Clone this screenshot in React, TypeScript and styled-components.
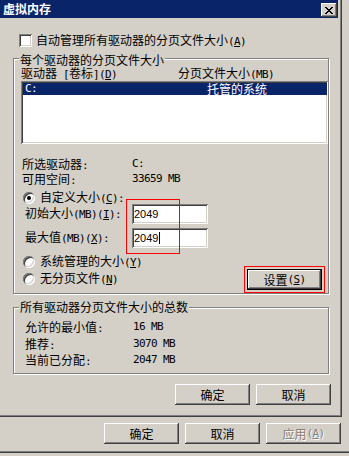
import * as React from 'react';
import styled, { createGlobalStyle, css } from 'styled-components';

const GlobalStyle = createGlobalStyle`
  html, body {
    margin: 0;
    padding: 0;
    background: #d4d0c8;
  }
  body {
    font-family: "Noto Sans CJK SC", "Noto Sans", sans-serif;
    font-size: 12px;
    line-height: 12px;
    color: #000;
  }
`;

const sunken = css`
  background: #fff;
  box-shadow: inset 1px 1px #808080, inset -1px -1px #fff, inset 2px 2px #404040,
    inset -2px -2px #d4d0c8;
`;

const raised = css`
  background: #d4d0c8;
  box-shadow: inset -1px -1px #404040, inset 1px 1px #fff, inset -2px -2px #808080,
    inset 2px 2px #d4d0c8;
`;

const Screen = styled.div`
  width: 349px;
  height: 456px;
  overflow: hidden;
  display: flex;
  flex-direction: column;
  background: #d4d0c8;
`;

const Window = styled.div`
  flex: none;
  width: 342px;
  height: 417px;
  box-sizing: border-box;
  border-right: 1px solid #404040;
  border-bottom: 1px solid #404040;
`;

const Frame = styled.div`
  height: 100%;
  box-sizing: border-box;
  border-right: 1px solid #808080;
  border-bottom: 1px solid #808080;
  padding-right: 2px;
  display: flex;
  flex-direction: column;
`;

const TitleBar = styled.div`
  height: 18px;
  flex: none;
  display: flex;
  justify-content: space-between;
  align-items: flex-start;
  padding: 0 1px 0 3px;
  background: #0a246a;
`;

const Title = styled.span`
  color: #fff;
  font-weight: bold;
  line-height: 18px;
`;

const CloseButton = styled.span`
  margin-top: 3px;
  width: 16px;
  height: 14px;
  display: flex;
  align-items: center;
  justify-content: center;
  ${raised}
`;

const Body = styled.div`
  display: flex;
  flex-direction: column;
  padding-left: 13px;
`;

const CheckRow = styled.div`
  margin: 16px 0 0 6px;
  height: 13px;
  display: flex;
  align-items: center;
  gap: 4px;
`;

const CheckBox = styled.span`
  flex: none;
  width: 13px;
  height: 13px;
  ${sunken}
`;

const Group = styled.div<{ $top: number; $height: number }>`
  position: relative;
  margin-top: ${p => p.$top}px;
  width: 316px;
  height: ${p => p.$height}px;
  box-sizing: border-box;
  border: 1px solid #808080;
  box-shadow: inset 1px 1px #fff, 1px 1px #fff;
  display: flex;
  flex-direction: column;
`;

const Legend = styled.span<{ $top: number }>`
  position: absolute;
  left: 5px;
  top: ${p => p.$top}px;
  padding: 0 1px;
  background: #d4d0c8;
  white-space: nowrap;
`;

const Lat = styled.span`
  font-family: "DejaVu Sans Mono", monospace;
  font-size: 11px;
  letter-spacing: -0.62px;
`;

const HeaderRow = styled.div`
  position: relative;
  z-index: 1;
  margin: 8px 0 0 7px;
  height: 12px;
  display: grid;
  grid-template-columns: 157px 1fr;
  white-space: nowrap;
`;

const ListBox = styled.div`
  margin: 2px 0 0 7px;
  width: 307px;
  height: 63px;
  box-sizing: border-box;
  padding: 2px 1px 2px 2px;
  ${sunken}
`;

const ListRow = styled.div<{ $selected?: boolean }>`
  height: 12px;
  padding-left: 2px;
  display: grid;
  grid-template-columns: 182px 1fr;
  background: ${p => (p.$selected ? '#0a246a' : 'transparent')};
  color: ${p => (p.$selected ? '#fff' : '#000')};
`;

const InfoGrid = styled.div<{ $top: number; $left: number; $label: number; $gap: number }>`
  margin: ${p => p.$top}px 0 0 ${p => p.$left}px;
  display: grid;
  grid-template-columns: ${p => p.$label}px auto;
  grid-auto-rows: 12px;
  row-gap: ${p => p.$gap}px;
  white-space: nowrap;
`;

const RadioRow = styled.div`
  height: 12px;
  display: flex;
  align-items: center;
  gap: 5px;
  white-space: nowrap;
`;

const Radio = styled.span<{ $checked?: boolean }>`
  position: relative;
  flex: none;
  width: 12px;
  height: 12px;
  border-radius: 50%;
  ${sunken}

  &::after {
    content: '';
    display: ${p => (p.$checked ? 'block' : 'none')};
    position: absolute;
    left: 4px;
    top: 4px;
    width: 4px;
    height: 4px;
    border-radius: 50%;
    background: #000;
  }
`;

const CustomBlock = styled.div`
  margin: 7px 0 0 9px;
  display: flex;
  flex-direction: column;
`;

const SizeGrid = styled.div`
  position: relative;
  margin-left: 2px;
  display: grid;
  grid-template-columns: 107px 76px;
  grid-auto-rows: 20px;
  row-gap: 4px;
  align-items: center;
  white-space: nowrap;
`;

const Field = styled.div`
  height: 20px;
  box-sizing: border-box;
  padding-left: 2px;
  display: flex;
  align-items: center;
  font-family: "Liberation Sans", sans-serif;
  font-size: 11px;
  ${sunken}
`;

const Caret = styled.span`
  display: inline-block;
  width: 1px;
  height: 12px;
  margin-left: 1px;
  background: #000;
`;

const Marker = styled.div`
  position: absolute;
  left: 101px;
  top: -5px;
  width: 54px;
  height: 55px;
  box-sizing: border-box;
  border: 1px solid #f00;
`;

const OptionRow = styled.div`
  margin-top: 8px;
  display: flex;
  justify-content: space-between;
  align-items: flex-end;
`;

const OptionColumn = styled.div`
  margin: 0 0 8px 9px;
  display: flex;
  flex-direction: column;
  gap: 5px;
`;

const HighlightFrame = styled.div`
  margin-right: 3px;
  padding: 2px;
  border: 1px solid #f00;
`;

const Button = styled.span<{ $default?: boolean; $disabled?: boolean }>`
  width: 75px;
  height: 21px;
  box-sizing: border-box;
  display: flex;
  align-items: center;
  justify-content: center;
  white-space: nowrap;
  color: ${p => (p.$disabled ? '#808080' : '#000')};
  text-shadow: ${p => (p.$disabled ? '1px 1px #fff' : 'none')};
  ${raised}
  ${p =>
    p.$default &&
    css`
      box-shadow: inset 0 0 0 1px #000, inset -2px -2px #404040, inset 2px 2px #fff,
        inset -3px -3px #808080;
    `}
`;

const ButtonRow = styled.div<{ $top: number; $left: number }>`
  margin-top: ${p => p.$top}px;
  padding-left: ${p => p.$left}px;
  display: flex;
  gap: 6px;
`;

const ParentFooter = styled.div`
  flex: none;
  height: 36px;
  box-sizing: border-box;
  border-bottom: 1px solid #404040;
  box-shadow: inset 0 -1px #808080;
`;

const Key = ({ k }: { k: string }) => (
  <Lat>
    (<u>{k}</u>)
  </Lat>
);

const CloseGlyph = () => (
  <svg width="8" height="7" viewBox="0 0 8 7" shapeRendering="crispEdges">
    <path
      d="M0 0h2v1H0zM6 0h2v1H6zM1 1h2v1H1zM5 1h2v1H5zM2 2h4v1H2zM3 3h2v1H3zM2 4h4v1H2zM1 5h2v1H1zM5 5h2v1H5zM0 6h2v1H0zM6 6h2v1H6z"
      fill="#000"
    />
  </svg>
);

const App: React.FC = () => {
  return (
    <Screen>
      <GlobalStyle />
      <Window>
        <Frame>
          <TitleBar>
            <Title>虚拟内存</Title>
            <CloseButton>
              <CloseGlyph />
            </CloseButton>
          </TitleBar>
          <Body>
            <CheckRow>
              <CheckBox />
              <span>
                自动管理所有驱动器的分页文件大小
                <Key k="A" />
              </span>
            </CheckRow>

            <Group $top={11} $height={236}>
              <Legend $top={-5}>每个驱动器的分页文件大小</Legend>
              <HeaderRow>
                <span>
                  驱动器<Lat> [</Lat>卷标<Lat>]</Lat>
                  <Key k="D" />
                </span>
                <span>
                  分页文件大小<Lat>(MB)</Lat>
                </span>
              </HeaderRow>
              <ListBox>
                <ListRow $selected>
                  <Lat>C:</Lat>
                  <span>托管的系统</span>
                </ListRow>
              </ListBox>
              <InfoGrid $top={14} $left={8} $label={110} $gap={3}>
                <span>
                  所选驱动器<Lat>:</Lat>
                </span>
                <Lat>C:</Lat>
                <span>
                  可用空间<Lat>:</Lat>
                </span>
                <Lat>33659 MB</Lat>
              </InfoGrid>
              <CustomBlock>
                <RadioRow>
                  <Radio $checked />
                  <span>
                    自定义大小<Key k="C" />
                    <Lat>:</Lat>
                  </span>
                </RadioRow>
                <SizeGrid>
                  <span>
                    初始大小<Lat>(MB)</Lat>
                    <Key k="I" />
                    <Lat>:</Lat>
                  </span>
                  <Field>2049</Field>
                  <span>
                    最大值<Lat>(MB)</Lat>
                    <Key k="X" />
                    <Lat>:</Lat>
                  </span>
                  <Field>
                    2049
                    <Caret />
                  </Field>
                  <Marker />
                </SizeGrid>
              </CustomBlock>
              <OptionRow>
                <OptionColumn>
                  <RadioRow>
                    <Radio />
                    <span>
                      系统管理的大小<Key k="Y" />
                    </span>
                  </RadioRow>
                  <RadioRow>
                    <Radio />
                    <span>
                      无分页文件<Key k="N" />
                    </span>
                  </RadioRow>
                </OptionColumn>
                <HighlightFrame>
                  <Button $default>
                    设置<Key k="S" />
                  </Button>
                </HighlightFrame>
              </OptionRow>
            </Group>

            <Group $top={13} $height={67}>
              <Legend $top={-7}>所有驱动器分页文件大小的总数</Legend>
              <InfoGrid $top={13} $left={11} $label={108} $gap={4.5}>
                <span>
                  允许的最小值<Lat>:</Lat>
                </span>
                <Lat>16 MB</Lat>
                <span>
                  推荐<Lat>:</Lat>
                </span>
                <Lat>3070 MB</Lat>
                <span>
                  当前已分配<Lat>:</Lat>
                </span>
                <Lat>2047 MB</Lat>
              </InfoGrid>
            </Group>

            <ButtonRow $top={10} $left={162}>
              <Button>确定</Button>
              <Button>取消</Button>
            </ButtonRow>
          </Body>
        </Frame>
      </Window>
      <ParentFooter>
        <ButtonRow $top={6} $left={104}>
          <Button>确定</Button>
          <Button>取消</Button>
          <Button $disabled>
            应用<Key k="A" />
          </Button>
        </ButtonRow>
      </ParentFooter>
    </Screen>
  );
};

export default App;
